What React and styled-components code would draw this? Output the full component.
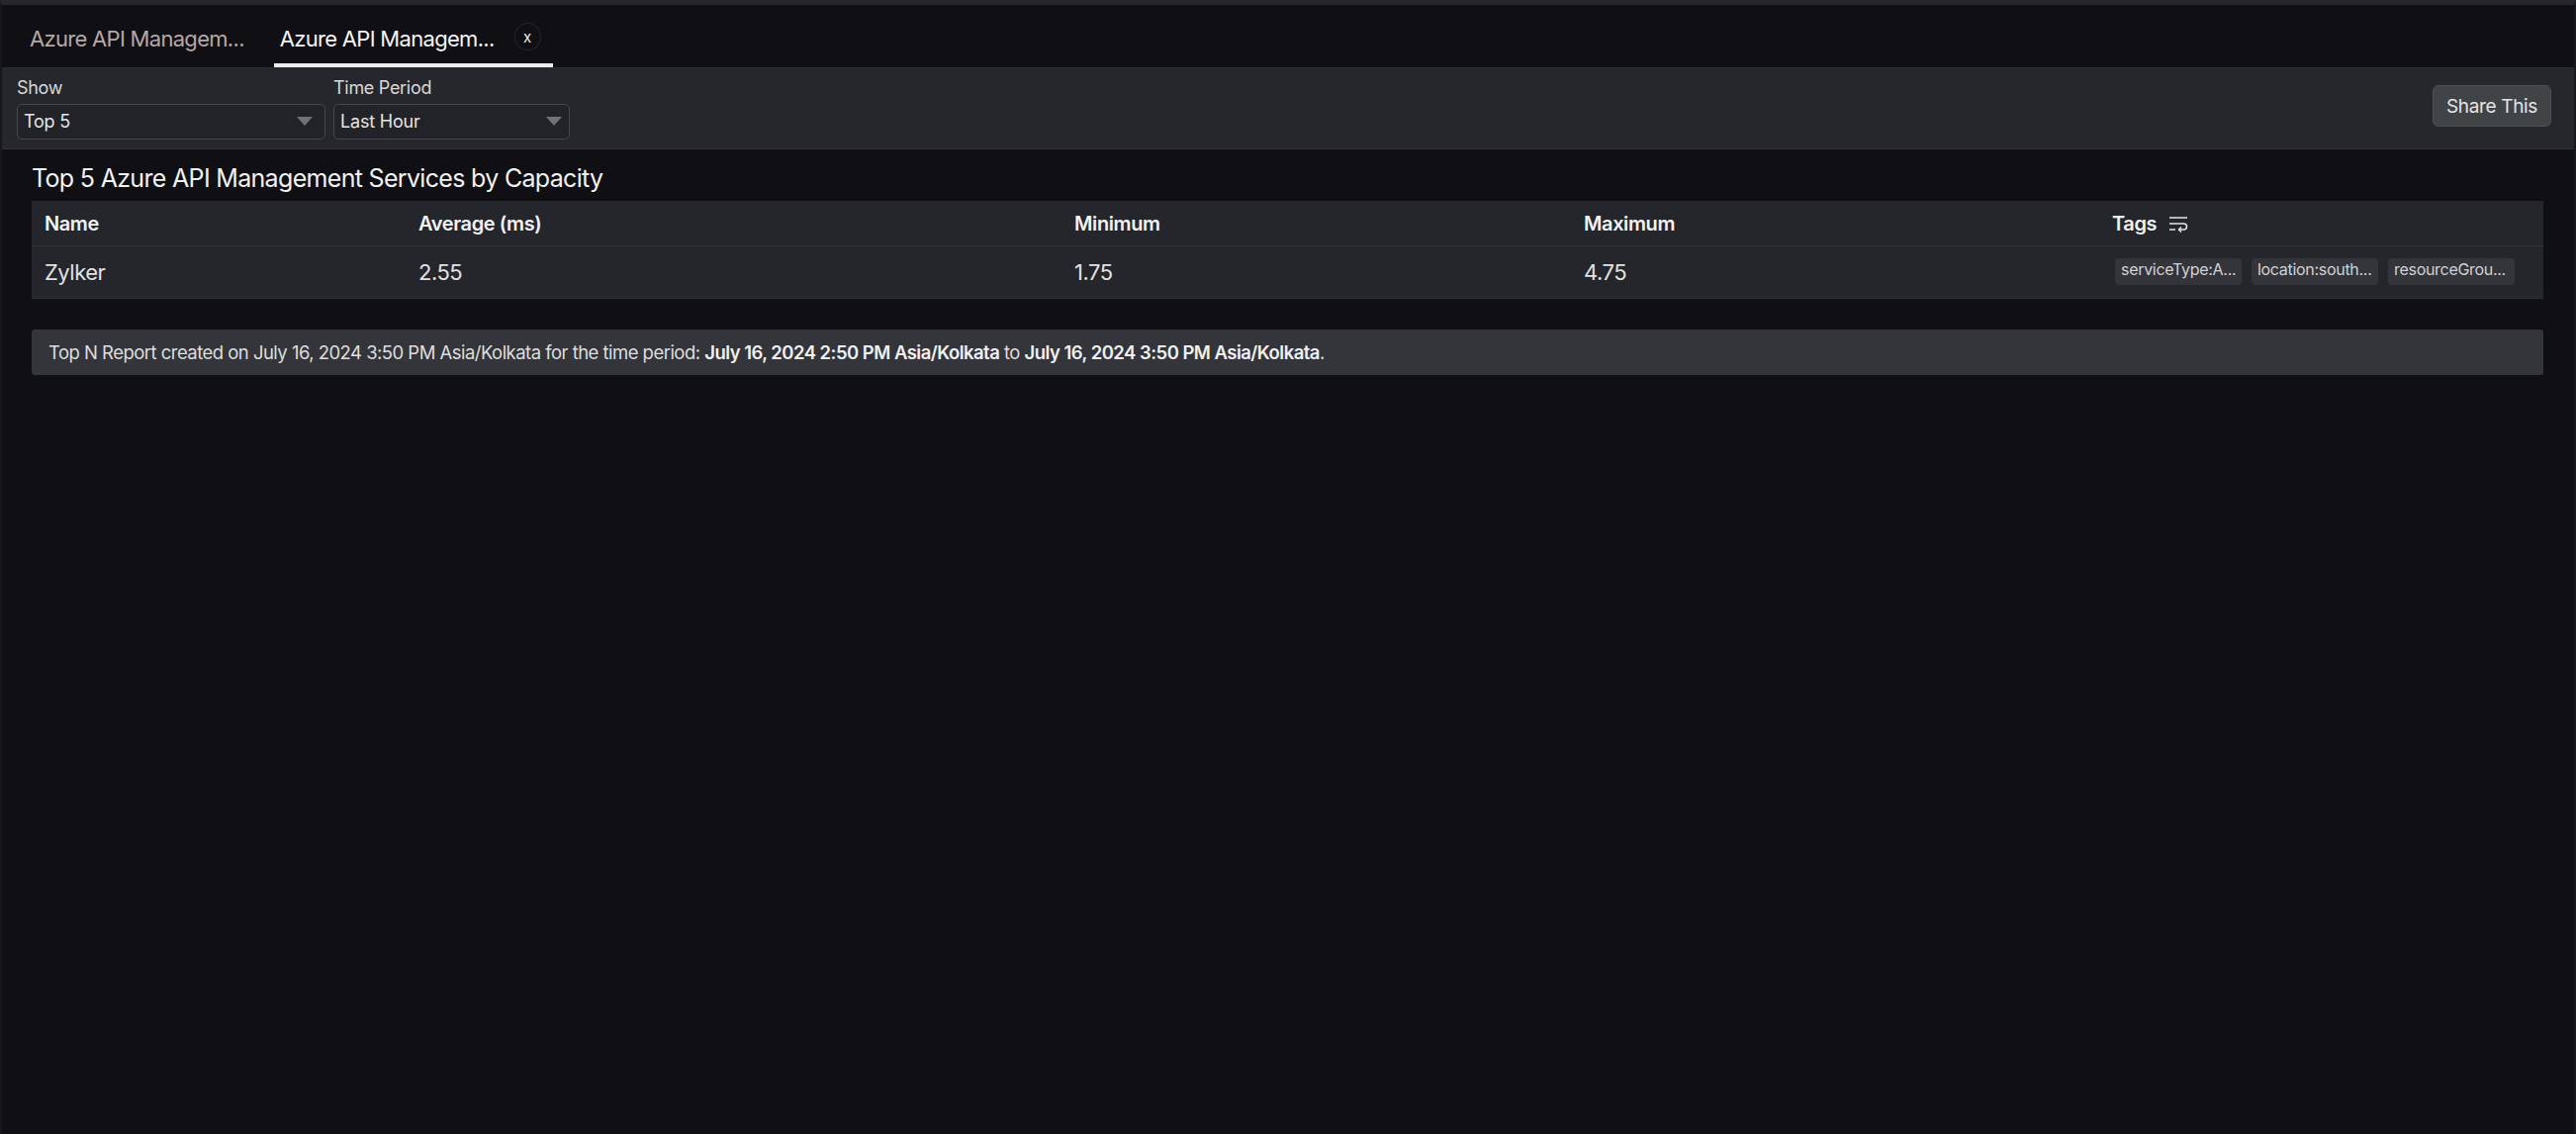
import React from 'react'
import styled, { createGlobalStyle } from 'styled-components'

const GlobalStyle = createGlobalStyle`
  html, body {
    margin: 0;
    padding: 0;
    height: 100%;
    background: #0f0f14;
  }
  body {
    font-family: Inter, "Noto Sans", "Liberation Sans", sans-serif;
    color: #e8e8e8;
  }
`

const Page = styled.div`
  box-sizing: border-box;
  height: 1146px;
  overflow: hidden;
  background: #0f0f14;
  border-left: 2px solid #17181d;
  border-right: 2px solid #17181d;
  border-top: 5px solid #26282e;
`

const TabBar = styled.div`
  display: flex;
  align-items: stretch;
  height: 63px;
  padding-left: 13px;
  box-sizing: border-box;
`

const Tab = styled.div`
  display: flex;
  align-items: center;
  gap: 20px;
  padding: 8px ${p => (p.$active ? '12px' : '15px')} 0 ${p => (p.$active ? '6px' : '15px')};
  margin-left: ${p => (p.$active ? '15px' : '0')};
  width: ${p => (p.$active ? '282px' : 'auto')};
  box-sizing: border-box;
  white-space: nowrap;
  font-size: 22px;
  letter-spacing: -0.7px;
  color: ${p => (p.$active ? '#f4f4f4' : '#b5a8a5')};
  border-bottom: 4px solid ${p => (p.$active ? '#ececec' : 'transparent')};
`

const CloseBadge = styled.span`
  display: flex;
  align-items: center;
  justify-content: center;
  width: 26px;
  height: 26px;
  margin-top: -3px;
  border-radius: 50%;
  border: 1px solid #25262c;
  font-size: 15px;
  letter-spacing: 0;
  color: #eee;
`

const Toolbar = styled.div`
  display: flex;
  align-items: flex-start;
  justify-content: space-between;
  box-sizing: border-box;
  height: 83px;
  padding: 9px 23px 0 15px;
  background: #25272c;
  border-top: 1px solid #2c2e33;
  border-bottom: 1px solid #303237;
`

const Filters = styled.div`
  display: flex;
  gap: 8px;
`

const Field = styled.div`
  display: flex;
  flex-direction: column;
  gap: 5px;
  width: ${p => p.$width}px;
`

const FieldLabel = styled.label`
  font-size: 18px;
  line-height: 22px;
  letter-spacing: -0.3px;
  color: #d9d9d9;
`

const SelectBox = styled.div`
  display: flex;
  align-items: center;
  justify-content: space-between;
  box-sizing: border-box;
  height: 36px;
  padding: 0 ${p => p.$caretGap}px 1px 6px;
  background: #212328;
  border: 1px solid #45474c;
  border-radius: 5px;
  font-size: 18px;
  letter-spacing: -0.2px;
  color: #e4e4e4;
`

const Caret = styled.span`
  width: 0;
  height: 0;
  border-left: 8px solid transparent;
  border-right: 8px solid transparent;
  border-top: 9px solid #707276;
`

const ShareButton = styled.button`
  box-sizing: border-box;
  height: 42px;
  width: 120px;
  margin-top: 8px;
  background: #414447;
  border: 1px solid #4c4f53;
  border-radius: 6px;
  font-family: inherit;
  font-size: 19px;
  letter-spacing: -0.35px;
  color: #e4e4e4;
  padding: 0;
`

const Content = styled.div`
  padding: 0 31px 0 30px;
`

const Title = styled.h1`
  margin: 0;
  height: 52px;
  display: flex;
  align-items: flex-end;
  padding-bottom: 8px;
  box-sizing: border-box;
  font-size: 25px;
  font-weight: 400;
  letter-spacing: -0.68px;
  line-height: 30px;
  color: #f1f1f1;
`

const Table = styled.div`
  background: #24262b;
  border-bottom: 1px solid #2f3136;
`

const Row = styled.div`
  display: grid;
  grid-template-columns: 378px 663px 515px 534px 1fr;
  align-items: center;
  box-sizing: border-box;
  height: ${p => (p.$head ? '46px' : '52px')};
  padding-left: 13px;
  border-bottom: ${p => (p.$head ? '1px solid #303237' : 'none')};
`

const HeadCell = styled.div`
  display: flex;
  align-items: center;
  gap: 12px;
  font-size: 20px;
  font-weight: 600;
  letter-spacing: -0.4px;
  color: #f2f2f2;
`

const Cell = styled.div`
  font-size: 22px;
  letter-spacing: -0.5px;
  color: #e2e2e2;
`

const TagList = styled.div`
  display: flex;
  gap: 10px;
  padding: 0 0 2px 3px;
`

const TagChip = styled.span`
  box-sizing: border-box;
  width: 128px;
  height: 27px;
  padding: 0 5px 4px 6px;
  display: flex;
  align-items: center;
  border-radius: 4px;
  background: #33353a;
  font-size: 16px;
  letter-spacing: -0.3px;
  color: #d2d2d2;
  white-space: nowrap;
`

const Notice = styled.div`
  display: flex;
  align-items: center;
  box-sizing: border-box;
  height: 46px;
  margin-top: 31px;
  padding-left: 17px;
  background: #33353a;
  border-radius: 3px;
  font-size: 18.5px;
  letter-spacing: -0.53px;
  color: #dedede;
  white-space: pre;

  b {
    font-weight: 600;
    color: #f0f0f0;
  }
`

const WrapIcon = () => (
  <svg width="20" height="18" viewBox="0 0 20 18" fill="none" stroke="#e6e6e6" strokeWidth="1.5">
    <path d="M1 3h18" />
    <path d="M1 9h14.5a3 3 0 0 1 0 6H11" />
    <path d="M13 12.5L10.5 15l2.5 2.5" />
    <path d="M1 15h6" />
  </svg>
)

const tags = ['serviceType:A...', 'location:south...', 'resourceGrou...']

const App = () => (
  <>
    <GlobalStyle />
    <Page>
      <TabBar>
        <Tab>Azure API Managem...</Tab>
        <Tab $active>
          Azure API Managem...
          <CloseBadge>x</CloseBadge>
        </Tab>
      </TabBar>
      <Toolbar>
        <Filters>
          <Field $width={312}>
            <FieldLabel>Show</FieldLabel>
            <SelectBox $caretGap={12}>
              Top 5
              <Caret />
            </SelectBox>
          </Field>
          <Field $width={239}>
            <FieldLabel>Time Period</FieldLabel>
            <SelectBox $caretGap={7}>
              Last Hour
              <Caret />
            </SelectBox>
          </Field>
        </Filters>
        <ShareButton>Share This</ShareButton>
      </Toolbar>
      <Content>
        <Title>Top 5 Azure API Management Services by Capacity</Title>
        <Table>
          <Row $head>
            <HeadCell>Name</HeadCell>
            <HeadCell>Average (ms)</HeadCell>
            <HeadCell>Minimum</HeadCell>
            <HeadCell>Maximum</HeadCell>
            <HeadCell>
              Tags <WrapIcon />
            </HeadCell>
          </Row>
          <Row>
            <Cell>Zylker</Cell>
            <Cell>2.55</Cell>
            <Cell>1.75</Cell>
            <Cell>4.75</Cell>
            <TagList>
              {tags.map(tag => (
                <TagChip key={tag}>{tag}</TagChip>
              ))}
            </TagList>
          </Row>
        </Table>
        <Notice>
          {'Top N Report created on July 16, 2024 3:50 PM Asia/Kolkata for the time period: '}
          <b>July 16, 2024 2:50 PM Asia/Kolkata</b>
          {' to '}
          <b>July 16, 2024 3:50 PM Asia/Kolkata</b>.
        </Notice>
      </Content>
    </Page>
  </>
)

export default App
